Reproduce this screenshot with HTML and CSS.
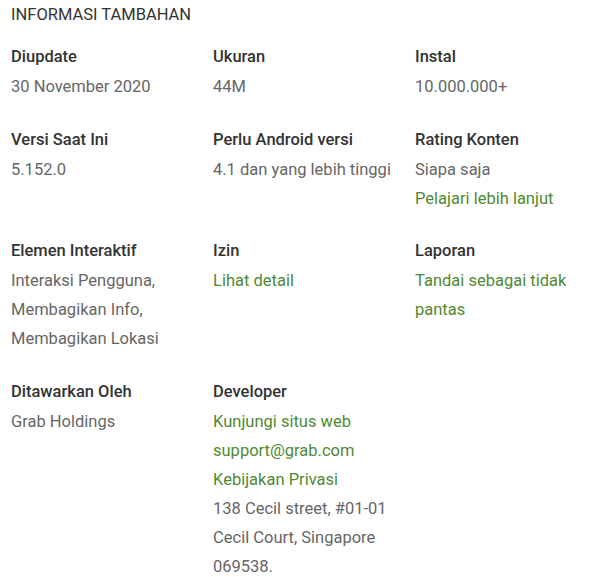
FILE: index.html
```html
<!DOCTYPE html>
<html lang="id">
<head>
    <meta charset="UTF-8">
    <title>Informasi Tambahan</title>
    <link rel="stylesheet" href="styles.css">
</head>
<body>
    <div class="info-section">
        <h2 class="info-title">INFORMASI TAMBAHAN</h2>

        <div class="info-grid">
            <div class="info-item">
                <div class="info-label">Diupdate</div>
                <div class="info-value">30 November 2020</div>
            </div>
            <div class="info-item">
                <div class="info-label">Ukuran</div>
                <div class="info-value">44M</div>
            </div>
            <div class="info-item">
                <div class="info-label">Instal</div>
                <div class="info-value">10.000.000+</div>
            </div>

            <div class="info-item">
                <div class="info-label">Versi Saat Ini</div>
                <div class="info-value">5.152.0</div>
            </div>
            <div class="info-item">
                <div class="info-label">Perlu Android versi</div>
                <div class="info-value">4.1 dan yang lebih tinggi</div>
            </div>
            <div class="info-item">
                <div class="info-label">Rating Konten</div>
                <div class="info-value">Siapa saja</div>
                <div class="info-value"><a class="info-link" href="#">Pelajari lebih lanjut</a></div>
            </div>

            <div class="info-item">
                <div class="info-label">Elemen Interaktif</div>
                <div class="info-value">Interaksi Pengguna,<br>Membagikan Info,<br>Membagikan Lokasi</div>
            </div>
            <div class="info-item">
                <div class="info-label">Izin</div>
                <div class="info-value"><a class="info-link" href="#">Lihat detail</a></div>
            </div>
            <div class="info-item">
                <div class="info-label">Laporan</div>
                <div class="info-value"><a class="info-link" href="#">Tandai sebagai tidak<br>pantas</a></div>
            </div>

            <div class="info-item">
                <div class="info-label">Ditawarkan Oleh</div>
                <div class="info-value">Grab Holdings</div>
            </div>
            <div class="info-item">
                <div class="info-label">Developer</div>
                <div class="info-value"><a class="info-link" href="#">Kunjungi situs web</a></div>
                <div class="info-value"><a class="info-link" href="#">support@grab.com</a></div>
                <div class="info-value"><a class="info-link" href="#">Kebijakan Privasi</a></div>
                <div class="info-value">138 Cecil street, #01-01<br>Cecil Court, Singapore<br>069538.</div>
            </div>
        </div>
    </div>
</body>
</html>
```

FILE: styles.css
```css
* {
    margin: 0;
    padding: 0;
    box-sizing: border-box;
}

body {
    font-family: Roboto, 'Liberation Sans', Arial, sans-serif;
    background-color: #ffffff;
    color: #333333;
    padding: 4px 0 0 11px;
}

.info-title {
    font-size: 16.5px;
    font-weight: 400;
    line-height: 22px;
    color: #333333;
    margin-bottom: 16px;
}

.info-grid {
    display: grid;
    grid-template-columns: 202px 202px 180px;
    row-gap: 23.5px;
}

.info-label {
    font-size: 16.5px;
    font-weight: 500;
    line-height: 30px;
    color: #333333;
}

.info-value {
    font-size: 16.5px;
    font-weight: 400;
    line-height: 29px;
    color: #666666;
}

.info-link {
    color: #4f8a32;
    text-decoration: none;
}
```
